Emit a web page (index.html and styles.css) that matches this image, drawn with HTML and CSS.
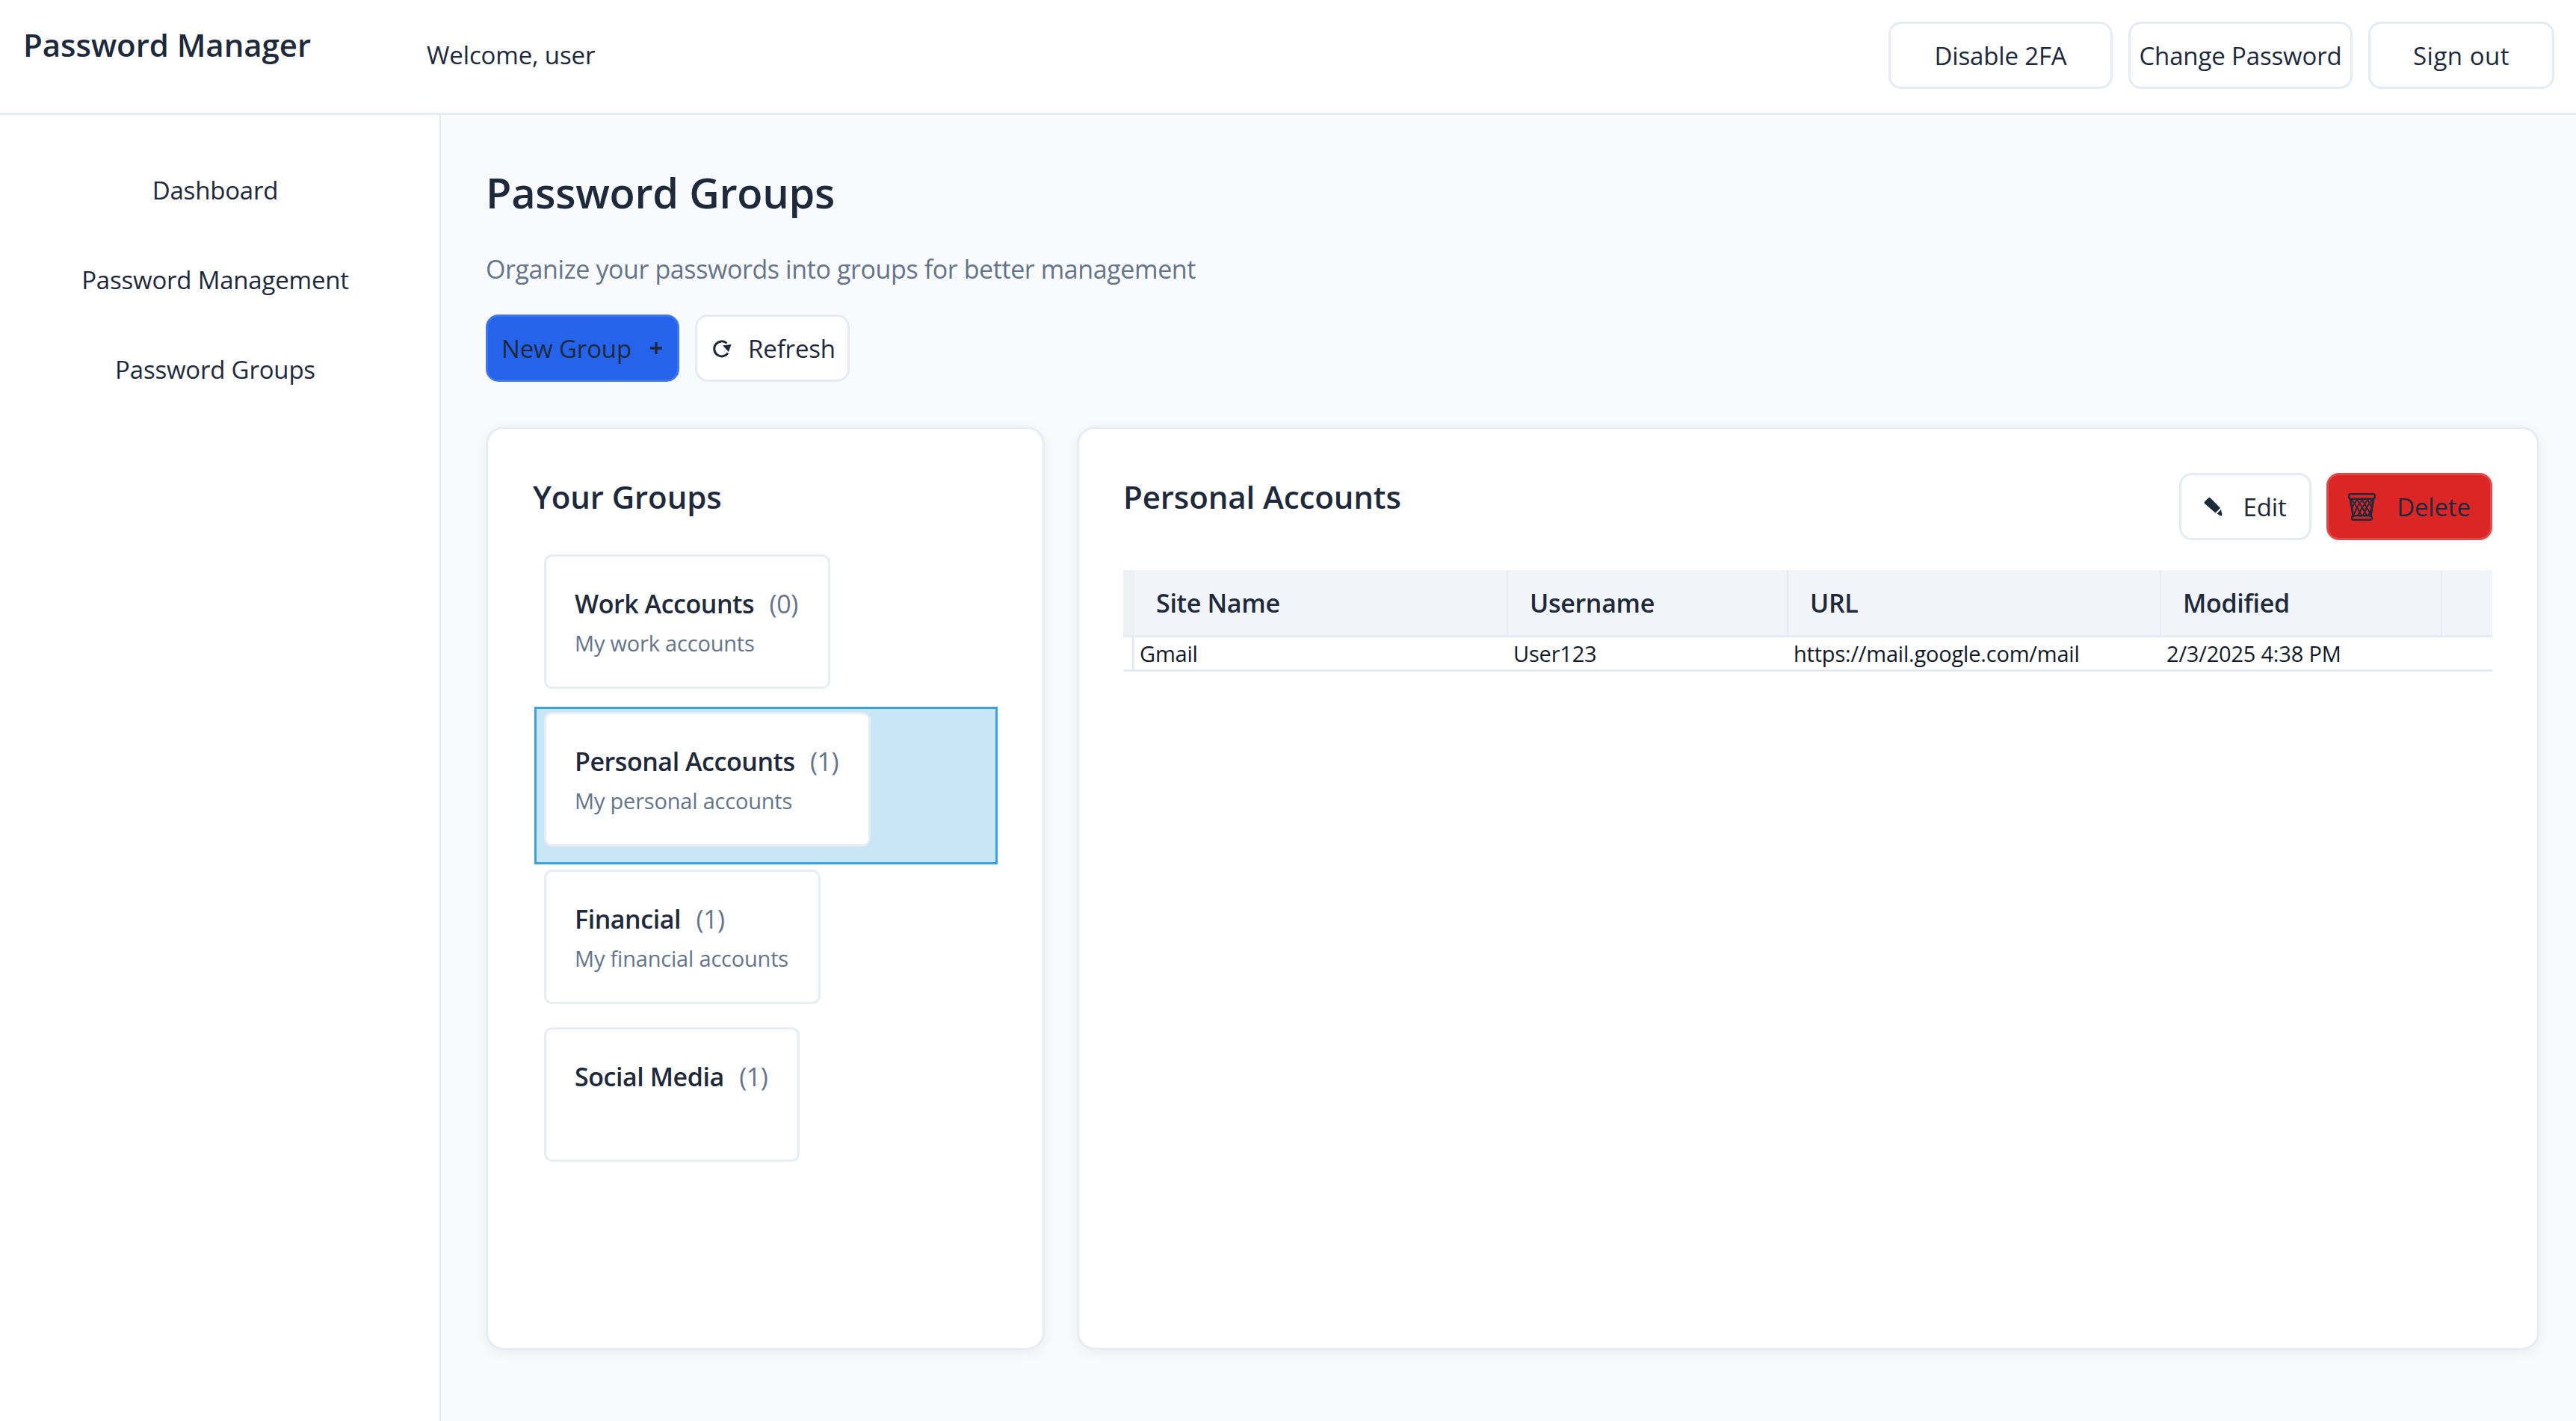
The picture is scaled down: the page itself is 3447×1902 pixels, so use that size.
FILE: index.html
```html
<!DOCTYPE html>
<html lang="en">
<head>
  <meta charset="UTF-8">
  <title>Password Manager</title>
  <link rel="stylesheet" href="styles.css">
</head>
<body>
  <header class="topbar">
    <div class="brand">Password Manager</div>
    <div class="welcome">Welcome, user</div>
    <div class="topbar-actions">
      <button class="btn btn-top btn-wide">Disable 2FA</button>
      <button class="btn btn-top btn-wide">Change Password</button>
      <button class="btn btn-top btn-signout">Sign out</button>
    </div>
  </header>

  <div class="layout">
    <nav class="sidebar">
      <a class="nav-link">Dashboard</a>
      <a class="nav-link">Password Management</a>
      <a class="nav-link">Password Groups</a>
    </nav>

    <main class="content">
      <h1 class="page-title">Password Groups</h1>
      <p class="page-sub">Organize your passwords into groups for better management</p>

      <div class="toolbar">
        <button class="btn btn-primary">New Group
          <svg class="icon-plus" viewBox="0 0 18 18"><path d="M9 1v16M1 9h16" fill="none" stroke="currentColor" stroke-width="3.4"/></svg>
        </button>
        <button class="btn btn-refresh">
          <svg class="icon-refresh" viewBox="0 0 26 26"><path d="M21 19.5A10 10 0 1 1 19.5 6.5" fill="none" stroke="currentColor" stroke-width="3"/><path d="M14 9.5 25.5 8 22 18z" fill="currentColor"/></svg>
          Refresh
        </button>
      </div>

      <div class="panels">
        <section class="panel panel-groups">
          <h2 class="panel-title">Your Groups</h2>
          <ul class="group-list">
            <li class="group-row">
              <div class="group-card">
                <div class="group-name">Work Accounts <span class="group-count">(0)</span></div>
                <div class="group-desc">My work accounts</div>
              </div>
            </li>
            <li class="group-row selected">
              <div class="group-card">
                <div class="group-name">Personal Accounts <span class="group-count">(1)</span></div>
                <div class="group-desc">My personal accounts</div>
              </div>
            </li>
            <li class="group-row">
              <div class="group-card">
                <div class="group-name">Financial <span class="group-count">(1)</span></div>
                <div class="group-desc">My financial accounts</div>
              </div>
            </li>
            <li class="group-row">
              <div class="group-card">
                <div class="group-name">Social Media <span class="group-count">(1)</span></div>
              </div>
            </li>
          </ul>
        </section>

        <section class="panel panel-detail">
          <div class="detail-head">
            <h2 class="panel-title">Personal Accounts</h2>
            <div class="detail-actions">
              <button class="btn btn-edit">
                <svg class="icon-pencil" viewBox="0 0 26 27"><path d="M1 6.5 6 1.5a2.4 2.4 0 0 1 3 .2L22 15l-6.5 6.5L1.6 9.6A2.3 2.3 0 0 1 1 6.5zM17.5 22.5l5.5-5.5 1.4 6.6a1.6 1.6 0 0 1-1.8 1.9z" fill="currentColor"/></svg>
                Edit
              </button>
              <button class="btn btn-danger">
                <svg class="icon-trash" viewBox="0 0 37 37">
                  <path d="M3 7 7 32M34 7 30 32" fill="none" stroke="currentColor" stroke-width="3"/>
                  <rect x="1.2" y="1.2" width="34.6" height="6.6" rx="2.5" fill="none" stroke="currentColor" stroke-width="2.4"/>
                  <rect x="5.2" y="30.2" width="26.6" height="5.6" rx="2.4" fill="none" stroke="currentColor" stroke-width="2.4"/>
                  <path d="M5 9l7 10-5 11M12 9l7 10-6 11M19 9l6 10-5 11M26 9l6 10-5 11M12 9 6 18M19 9l-7 10 6 11M26 9l-7 10 6 11M32 9l-7 10 6 11" fill="none" stroke="currentColor" stroke-width="1.9"/>
                </svg>
                Delete
              </button>
            </div>
          </div>

          <table class="entries">
            <colgroup>
              <col class="col-gutter"><col class="col-site"><col class="col-user"><col class="col-url"><col class="col-mod"><col class="col-end">
            </colgroup>
            <thead>
              <tr><th class="gutter"></th><th>Site Name</th><th>Username</th><th>URL</th><th>Modified</th><th></th></tr>
            </thead>
            <tbody>
              <tr><td class="gutter"></td><td>Gmail</td><td>User123</td><td>https://mail.google.com/mail</td><td>2/3/2025 4:38 PM</td><td></td></tr>
            </tbody>
          </table>
        </section>
      </div>
    </main>
  </div>
</body>
</html>
```

FILE: styles.css
```css
* { box-sizing: border-box; }
html, body { height: 100%; }
body {
  margin: 0;
  font-family: "Open Sans", "Noto Sans", sans-serif;
  background: #f8fafc;
  color: #1e293b;
  overflow: hidden;
}

/* top bar */
.topbar {
  display: flex;
  align-items: center;
  height: 154px;
  padding: 0 29px 0 31px;
  background: #fff;
  border-bottom: 3px solid #e6ebf3;
}
.brand {
  width: 540px;
  margin-top: -32px;
  font-size: 42px;
  font-weight: 600;
  letter-spacing: -0.05px;
}
.welcome {
  font-size: 33px;
  letter-spacing: -0.15px;
  margin-top: -4px;
}
.topbar-actions {
  display: flex;
  gap: 21px;
  margin-left: auto;
  margin-top: -3px;
}

/* buttons */
.btn {
  display: inline-flex;
  align-items: center;
  justify-content: center;
  height: 90px;
  border: 3px solid #e6ebf3;
  border-radius: 17px;
  background: #fff;
  color: #1e293b;
  font-family: inherit;
  font-size: 33px;
  letter-spacing: -0.15px;
  padding: 0;
}
.btn-wide { width: 300px; }
.btn-signout { width: 249px; letter-spacing: 0.5px; }
.btn-primary {
  width: 259px;
  gap: 24px;
  padding-right: 1px;
  background: #2563eb;
  border-color: #3b76ee;
}
.btn-refresh { width: 207px; gap: 22px; padding-left: 4px; }
.btn-edit { width: 177px; gap: 26px; }
.btn-danger {
  width: 222px;
  gap: 28px;
  background: #dc2626;
  border-color: #e24a4a;
}
.icon-plus { width: 18px; height: 18px; }
.icon-refresh { width: 26px; height: 26px; }
.icon-pencil { width: 26px; height: 27px; }
.icon-trash { width: 37px; height: 37px; }

/* page layout */
.layout {
  display: flex;
  height: calc(100% - 154px);
}
.sidebar {
  display: flex;
  flex-direction: column;
  align-items: center;
  gap: 50px;
  width: 590px;
  padding: 66px 12px 0 0;
  background: #fff;
  border-right: 2px solid #e6ebf3;
}
.nav-link {
  font-size: 33px;
  line-height: 70px;
  letter-spacing: -0.2px;
}
.content {
  flex: 1;
  padding: 58px 49px 0 60px;
}
.page-title {
  margin: 0;
  font-size: 56px;
  line-height: 90px;
  font-weight: 600;
  letter-spacing: -0.3px;
}
.page-sub {
  margin: 13px 0 0;
  font-size: 34px;
  line-height: 90px;
  color: #64748b;
  letter-spacing: -0.4px;
}
.toolbar {
  display: flex;
  gap: 21px;
  margin-top: 16px;
}

/* panels */
.panels {
  display: flex;
  gap: 43px;
  margin-top: 60px;
  height: 1236px;
}
.panel {
  background: #fff;
  border: 3px solid #e8edf4;
  border-radius: 24px;
  padding: 59px 60px;
  box-shadow: 0 4px 16px rgba(15, 23, 42, 0.06);
}
.panel-groups { width: 748px; }
.panel-detail { flex: 1; min-width: 0; padding-left: 59px; }
.panel-title {
  margin: 0;
  font-size: 42px;
  line-height: 64px;
  font-weight: 600;
  letter-spacing: -0.1px;
}

/* group list */
.group-list {
  list-style: none;
  margin: 38px 0 0 2px;
  padding: 0;
}
.group-row {
  height: 211px;
  padding: 4px 10px;
  border: 3px solid transparent;
}
.group-row.selected {
  background: #c9e6f6;
  border-color: #38a3e0;
}
.group-card {
  display: inline-block;
  height: 180px;
  padding: 37px 40px 0 38px;
  background: #fff;
  border: 3px solid #e8edf4;
  border-radius: 11px;
  vertical-align: top;
}
.group-name {
  font-size: 34px;
  line-height: 52px;
  font-weight: 600;
  letter-spacing: -0.45px;
  white-space: nowrap;
}
.group-count {
  margin-left: 12px;
  font-weight: 400;
  color: #64748b;
}
.group-desc {
  margin-top: 1px;
  font-size: 29px;
  line-height: 52px;
  color: #64748b;
  letter-spacing: -0.2px;
  white-space: nowrap;
}

/* detail table */
.detail-head {
  display: flex;
  justify-content: space-between;
  align-items: flex-start;
}
.detail-actions {
  display: flex;
  gap: 20px;
}
.entries {
  table-layout: fixed;
  width: 100%;
  margin-top: 40px;
  border-collapse: separate;
  border-spacing: 0;
}
.col-gutter { width: 15px; }
.col-site { width: 500px; }
.col-user { width: 375px; }
.col-url { width: 499px; }
.col-mod { width: 376px; }
.entries th {
  height: 90px;
  padding: 0 0 0 29px;
  background: #f1f5f9;
  border-bottom: 3px solid #e6ebf3;
  border-right: 2px solid #e6ebf3;
  font-size: 34px;
  font-weight: 600;
  text-align: left;
  letter-spacing: -0.3px;
}
.entries th:last-child { border-right: 0; }
.entries th.gutter {
  padding: 0;
  background: #eef0f3;
  border-right: 0;
}
.entries td {
  height: 46px;
  padding: 0 0 0 7px;
  border-bottom: 3px solid #e6ebf3;
  color: #111827;
  font-size: 29px;
  letter-spacing: -0.2px;
  white-space: nowrap;
}
.entries td.gutter {
  padding: 0;
  border-right: 3px solid #e6ebf3;
}
```
